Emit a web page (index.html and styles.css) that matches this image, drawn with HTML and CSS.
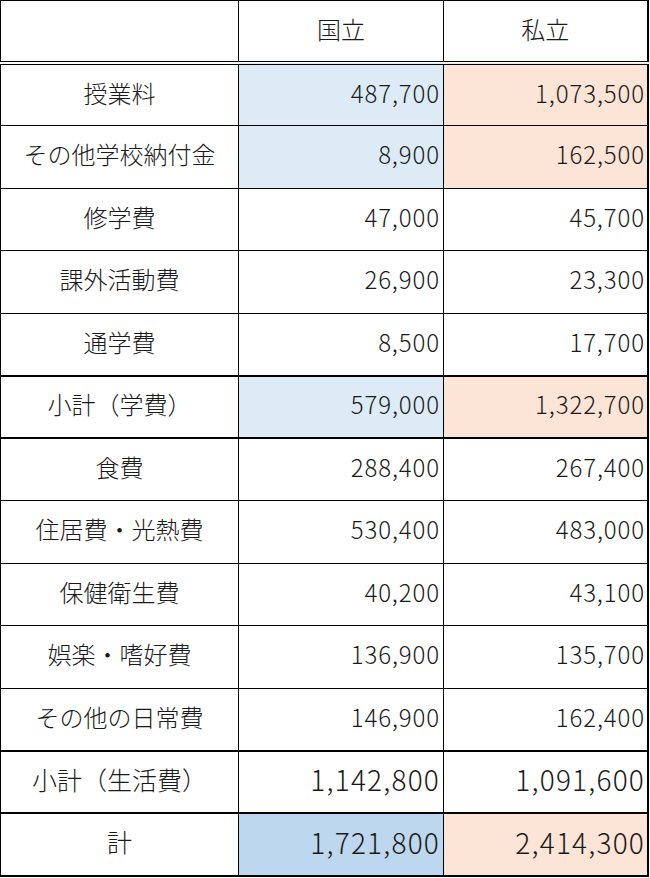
FILE: index.html
```html
<!DOCTYPE html>
<html lang="ja">
<head>
<meta charset="utf-8">
<link rel="stylesheet" href="styles.css">
</head>
<body>
<table class="cost">
  <colgroup>
    <col class="c-label">
    <col class="c-num">
    <col class="c-num2">
  </colgroup>
  <tr class="head">
    <th></th><th>国立</th><th>私立</th>
  </tr>
  <tr>
    <td class="label">授業料</td><td class="num blue">487,700</td><td class="num peach">1,073,500</td>
  </tr>
  <tr>
    <td class="label">その他学校納付金</td><td class="num blue">8,900</td><td class="num peach">162,500</td>
  </tr>
  <tr>
    <td class="label">修学費</td><td class="num">47,000</td><td class="num">45,700</td>
  </tr>
  <tr>
    <td class="label">課外活動費</td><td class="num">26,900</td><td class="num">23,300</td>
  </tr>
  <tr>
    <td class="label">通学費</td><td class="num">8,500</td><td class="num">17,700</td>
  </tr>
  <tr class="thick">
    <td class="label">小計（学費）</td><td class="num blue">579,000</td><td class="num peach">1,322,700</td>
  </tr>
  <tr>
    <td class="label">食費</td><td class="num">288,400</td><td class="num">267,400</td>
  </tr>
  <tr>
    <td class="label">住居費・光熱費</td><td class="num">530,400</td><td class="num">483,000</td>
  </tr>
  <tr>
    <td class="label">保健衛生費</td><td class="num">40,200</td><td class="num">43,100</td>
  </tr>
  <tr>
    <td class="label">娯楽・嗜好費</td><td class="num">136,900</td><td class="num">135,700</td>
  </tr>
  <tr>
    <td class="label">その他の日常費</td><td class="num">146,900</td><td class="num">162,400</td>
  </tr>
  <tr class="thick big">
    <td class="label">小計（生活費）</td><td class="num">1,142,800</td><td class="num">1,091,600</td>
  </tr>
  <tr class="thick big total">
    <td class="label">計</td><td class="num blue-dark">1,721,800</td><td class="num peach">2,414,300</td>
  </tr>
</table>
</body>
</html>
```

FILE: styles.css
```css
html, body {
  margin: 0;
  padding: 0;
  background: #ffffff;
}

.cost {
  border-collapse: collapse;
  table-layout: fixed;
  width: 647px;
  font-family: "Noto Sans CJK JP", "Noto Sans", sans-serif;
  font-weight: 300;
  font-size: 24px;
  color: #1a1a1a;
  border-top: 1.5px solid #000;
  border-left: 1.5px solid #000;
  border-right: 2px solid #000;
  border-bottom: 2px solid #000;
}

.c-label { width: 238px; }
.c-num { width: 205px; }
.c-num2 { width: 204px; }

.cost tr {
  height: 62.5px;
}

.cost th,
.cost td {
  border: 1px solid #000;
  padding: 0 4px 5px 0;
  vertical-align: middle;
  font-weight: 300;
  line-height: 1;
}

.head th {
  text-align: center;
  padding: 0 0 4px 0;
  border-bottom: 4px double #000;
}

.label {
  text-align: center;
  padding-right: 0 !important;
}

.num {
  text-align: right;
  font-size: 24px;
  letter-spacing: 0.9px;
  padding-right: 3px !important;
}

.num.peach,
tr > .num:last-child {
  padding-right: 1.5px !important;
}

.thick td {
  border-top: 2px solid #000;
  border-bottom: 2px solid #000;
}

.big .label {
  font-size: 25px;
}

.big .num {
  font-size: 28px;
  letter-spacing: 1.2px;
}

.blue { background: #ddebf7; }
.blue-dark { background: #bdd7ee; }
.peach { background: #fce4d6; }
```
